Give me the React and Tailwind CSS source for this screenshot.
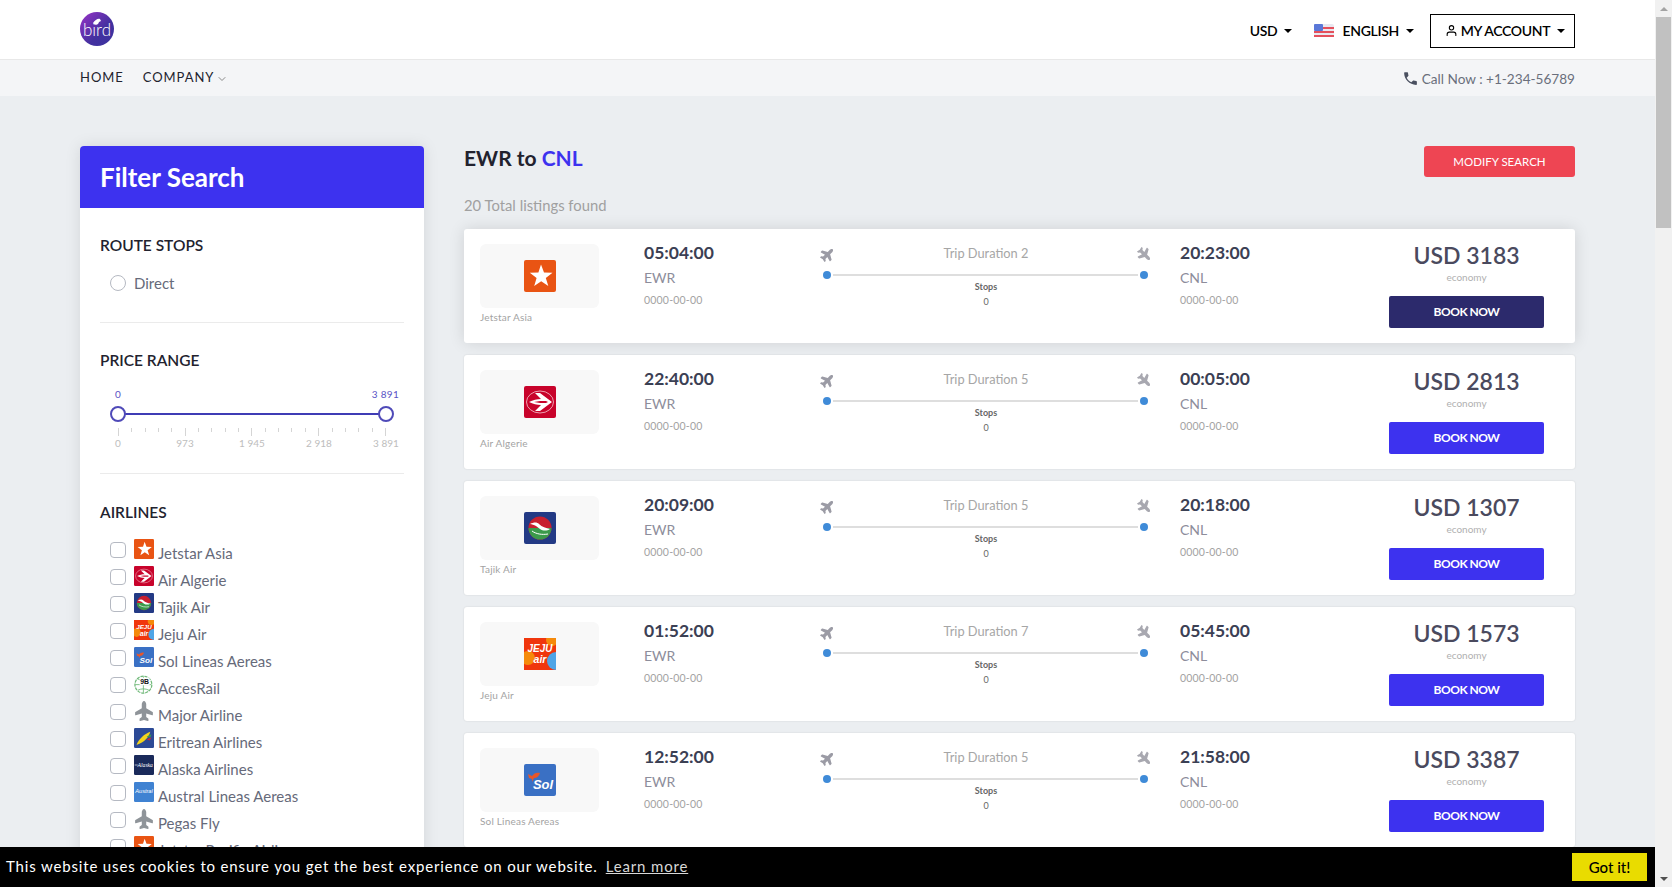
import React from "react";
import { FaPlane } from "react-icons/fa";
import { MdPhone } from "react-icons/md";
import { FiChevronDown, FiUser } from "react-icons/fi";

const font = "font-['Lato','Noto_Sans',sans-serif]";

// little airline marks, all on a 32 box
const AirlineLogo = ({ name, size = 32 }) => {
  if (name === "plane") {
    return (
      <span className="flex items-center justify-center" style={{ width: size, height: size }}>
        <FaPlane className="-rotate-90 text-[#8f9499]" size={size} />
      </span>
    );
  }
  return (
    <svg width={size} height={size} viewBox="0 0 32 32" className="block">
      {name === "jetstar" && (
        <>
          <rect width="32" height="32" rx="2" fill="#e95413" />
          <path d="M17 4.500l3 8 8.500.2-6.700 5.200 2.500 8.100-7.100-4.800-7 4.700 2.400-8-6.800-5.200 8.600-.2z" fill="#fff" />
        </>
      )}
      {name === "algerie" && (
        <>
          <rect width="32" height="32" rx="2" fill="#c8032b" />
          <ellipse cx="16" cy="16" rx="13.500" ry="11" fill="none" stroke="#f5c6cf" strokeWidth="0.8" />
          <path d="M5 16c4-2 8-3 12-3l-6-6h5l12 9-12 9h-5l6-6c-4 0-8-1-12-3z" fill="#fff" />
          <path d="M10 16l6-1h6l2 1-2 1h-6z" fill="#c8032b" />
        </>
      )}
      {name === "tajik" && (
        <>
          <rect width="32" height="32" rx="2" fill="#233a85" />
          <circle cx="16" cy="16" r="11.500" fill="#c8202f" />
          <path d="M4.500 16h23a11.500 11.500 0 0 1-23 0z" fill="#3b9a4b" />
          <path d="M6 12c4-2 7-2 9 0 3 3 7 4 11 5-3 2-7 2-10 0l-4-3c-2-1-4-2-6-2z" fill="#fff" />
          <path d="M8 19c4 3 10 4 16 3" fill="none" stroke="#fff" strokeWidth="1" />
        </>
      )}
      {name === "jeju" && (
        <>
          <rect width="32" height="32" fill="#f0360d" />
          <circle cx="28" cy="2" r="6" fill="#f58a0b" />
          <circle cx="4" cy="20" r="7" fill="#f58a0b" />
          <path d="M32 14a9 9 0 0 0 0 18z" fill="#4fa5e6" />
          <text x="16" y="14" textAnchor="middle" fontSize="10" fontWeight="900" fontStyle="italic" fill="#fff" fontFamily="Liberation Sans">JEJU</text>
          <text x="16" y="25" textAnchor="middle" fontSize="10.500" fontWeight="900" fontStyle="italic" fill="#fff" fontFamily="Liberation Sans">air</text>
        </>
      )}
      {name === "sol" && (
        <>
          <rect width="32" height="32" rx="2" fill="#3a70c4" />
          <path d="M4 10l4 2c2-3 5-4 8-3-1 3-3 5-6 5l-2 4 0-3-3-1z" fill="#e8562a" />
          <text x="19" y="25" textAnchor="middle" fontSize="13" fontWeight="700" fontStyle="italic" fill="#fff" fontFamily="Liberation Sans">Sol</text>
        </>
      )}
      {name === "acces" && (
        <>
          <circle cx="15" cy="17" r="13.500" fill="none" stroke="#6fb878" strokeWidth="2" strokeDasharray="5 1.500" />
          <path d="M2 17h26M15 4v26M6 8c6 3 12 3 18 0M6 26c6-3 12-3 18 0" fill="none" stroke="#6fb878" strokeWidth="1.400" />
          <rect x="9" y="6" width="16" height="12" fill="#fff" />
          <text x="17" y="16" textAnchor="middle" fontSize="11" fontWeight="700" fill="#111" fontFamily="Liberation Sans">9B</text>
        </>
      )}
      {name === "eritrean" && (
        <>
          <rect width="32" height="32" rx="2" fill="#2c4a96" />
          <path d="M4 27C8 17 16 10 26 6c-2 8-9 17-22 21z" fill="#f3d41c" />
          <path d="M20 14l8-4-2 5z" fill="#3a9a4a" />
          <path d="M20 18l8-3-3 5z" fill="#d3282f" />
        </>
      )}
      {name === "alaska" && (
        <>
          <rect width="32" height="32" rx="2" fill="#1a2a5a" />
          <text x="18" y="19" textAnchor="middle" fontSize="9" fontStyle="italic" fill="#fff" fontFamily="Liberation Serif">Alaska</text>
          <path d="M1 16h5" stroke="#fff" strokeWidth="1" />
        </>
      )}
      {name === "austral" && (
        <>
          <rect width="32" height="32" rx="2" fill="#3f82d2" />
          <text x="16" y="18" textAnchor="middle" fontSize="9" fontStyle="italic" fill="#fff" fontFamily="Liberation Sans">Austral</text>
        </>
      )}
    </svg>
  );
};

const airlines = [
  { name: "Jetstar Asia", logo: "jetstar" },
  { name: "Air Algerie", logo: "algerie" },
  { name: "Tajik Air", logo: "tajik" },
  { name: "Jeju Air", logo: "jeju" },
  { name: "Sol Lineas Aereas", logo: "sol" },
  { name: "AccesRail", logo: "acces" },
  { name: "Major Airline", logo: "plane" },
  { name: "Eritrean Airlines", logo: "eritrean" },
  { name: "Alaska Airlines", logo: "alaska" },
  { name: "Austral Lineas Aereas", logo: "austral" },
  { name: "Pegas Fly", logo: "plane" },
  { name: "Jetstar Pacific Airlines", logo: "jetstar" },
];

const flights = [
  { airline: "Jetstar Asia", logo: "jetstar", dep: "05:04:00", arr: "20:23:00", trip: 2, price: 3183 },
  { airline: "Air Algerie", logo: "algerie", dep: "22:40:00", arr: "00:05:00", trip: 5, price: 2813 },
  { airline: "Tajik Air", logo: "tajik", dep: "20:09:00", arr: "20:18:00", trip: 5, price: 1307 },
  { airline: "Jeju Air", logo: "jeju", dep: "01:52:00", arr: "05:45:00", trip: 7, price: 1573 },
  { airline: "Sol Lineas Aereas", logo: "sol", dep: "12:52:00", arr: "21:58:00", trip: 5, price: 3387 },
  { airline: "AccesRail", logo: "acces", dep: "09:15:00", arr: "14:32:00", trip: 5, price: 2140 },
];

const Caret = () => (
  <span className="ml-[7px] inline-block border-x-[4px] border-t-[4px] border-x-transparent border-t-black" />
);

const TimeCol = ({ time, code, className }) => (
  <div className={className}>
    <p className="-mt-[1px] text-[17.500px] leading-[20px] font-bold text-[#3b4054]">{time}</p>
    <p className="mt-[5px] text-[14px] leading-[20px] text-[#8d8d9b]">{code}</p>
    <p className="mt-[4px] text-[10.500px] leading-[17px] text-[#a3a3a3] tracking-[0.2px]">0000-00-00</p>
  </div>
);

const FlightCard = ({ flight, first }) => (
  <div
    className={
      first
        ? "flex h-[114px] shrink-0 rounded-[3px] bg-white pl-[16px] pt-[15px] shadow-[0_0_16px_rgba(0,0,0,0.12)]"
        : "flex h-[114px] shrink-0 rounded-[3px] bg-white pl-[16px] pt-[15px] shadow-[0_0_2px_rgba(0,0,0,0.12)]"
    }
  >
    <div className="w-[119px] shrink-0">
      <div className="flex h-[64px] items-center justify-center rounded-[6px] bg-[#f8f8f8]">
        <AirlineLogo name={flight.logo} />
      </div>
      <p className="mt-[3px] text-[10px] leading-[12px] text-[#a3a3a3] tracking-[0.2px]">{flight.airline}</p>
    </div>
    <TimeCol time={flight.dep} code="EWR" className="ml-[45px] w-[176px] shrink-0" />
    <div className="w-[332px] shrink-0">
      <div className="-mt-[2px] flex h-[24px] items-center justify-between">
        <FaPlane className="-rotate-45 text-[#9b9ba5]" size={15} />
        <span className="-mt-[1px] text-[12.800px] text-[#a6a6a6]">Trip Duration {flight.trip}</span>
        <FaPlane className="rotate-45 text-[#a8a8b0]" size={15} />
      </div>
      <div className="mt-[5px] flex items-center gap-[2px] pl-[3px] pr-[4px]">
        <span className="h-[8px] w-[8px] rounded-full bg-[#3f8bd8]" />
        <span className="h-[2px] flex-1 bg-[#dedede]" />
        <span className="h-[8px] w-[8px] rounded-full bg-[#3f8bd8]" />
      </div>
      <p className="mt-[1px] text-center text-[9px] leading-[14px] font-bold text-[#666]">Stops</p>
      <p className="text-center text-[9px] leading-[15px] text-[#666]">0</p>
    </div>
    <TimeCol time={flight.arr} code="CNL" className="ml-[28px] w-[209px] shrink-0" />
    <div className="flex w-[155px] shrink-0 flex-col items-center">
      <p className="text-[23px] leading-[22px] font-semibold text-[#4a4a5e]">USD {flight.price}</p>
      <p className="mt-[3px] text-[10px] leading-[16px] text-[#b0b0b0]">economy</p>
      <button
        className={
          first
            ? "mt-[11px] h-[32px] w-full rounded-[2px] bg-[#2c2a6c] text-[12px] font-bold tracking-[-0.5px] text-white"
            : "mt-[11px] h-[32px] w-full rounded-[2px] bg-[#3d32ef] text-[12px] font-bold tracking-[-0.5px] text-white"
        }
      >
        BOOK NOW
      </button>
    </div>
  </div>
);

const PriceSlider = () => (
  <div className="relative mx-[18px] mt-[18px]">
    <div className="-ml-[10px] -mr-[13px] flex justify-between text-[10px] leading-[12px] text-[#5a52c5]">
      <span className="pl-[7px]">0</span>
      <span className="tracking-[0.3px]">3 891</span>
    </div>
    <div className="relative mt-[6px] h-[16px]">
      <div className="absolute left-0 right-0 top-[7px] h-[2px] bg-[#3f3cb5]" />
      <span className="absolute left-[-8px] top-0 h-[16px] w-[16px] rounded-full border-[2px] border-[#4f4ab8] bg-white" />
      <span className="absolute right-[-8px] top-0 h-[16px] w-[16px] rounded-full border-[2px] border-[#4f4ab8] bg-white" />
    </div>
    <div className="mt-[6px] flex h-[8px] items-start justify-between">
      {Array.from({ length: 21 }).map((_, i) => (
        <span key={i} className={i % 5 === 0 ? "h-[8px] w-px bg-[#d5d5d5]" : "h-[4px] w-px bg-[#d5d5d5]"} />
      ))}
    </div>
    <div className="-mx-[20px] mt-[1px] flex justify-between text-[10px] leading-[12px] text-[#bdbdbd]">
      {["0", "973", "1 945", "2 918", "3 891"].map((t) => (
        <span key={t} className="w-[40px] text-center">{t}</span>
      ))}
    </div>
  </div>
);

const Sidebar = () => (
  <aside className="w-[344px] shrink-0 overflow-hidden rounded-t-[4px] bg-white shadow-[0_0_16px_rgba(0,0,0,0.1)]">
    <div className="flex h-[62px] items-center bg-[#3d32ef] px-[20px] pt-[1px]">
      <h2 className="text-[26px] font-bold text-white">Filter Search</h2>
    </div>
    <div className="px-[20px]">
      <div className="border-b border-[#ebebeb] pt-[27px] pb-[29px]">
        <h3 className="text-[15.500px] leading-[20px] font-semibold text-[#22222e]">ROUTE STOPS</h3>
        <label className="mt-[18px] flex h-[20px] items-center pl-[10px]">
          <span className="h-[16px] w-[16px] rounded-full border border-[#b5b9c2]" />
          <span className="ml-[8px] text-[15px] text-[#666a7a]">Direct</span>
        </label>
      </div>
      <div className="h-[151px] border-b border-[#ebebeb] pt-[27px]">
        <h3 className="text-[15.500px] leading-[20px] font-semibold text-[#22222e]">PRICE RANGE</h3>
        <PriceSlider />
      </div>
      <h3 className="mt-[28px] text-[15.500px] leading-[20px] font-semibold text-[#22222e]">AIRLINES</h3>
      <ul className="mt-[17px] pl-[10px]">
        {airlines.map((a) => (
          <li key={a.name} className="flex h-[27px] items-start">
            <span className="mt-[3px] h-[16px] w-[16px] shrink-0 rounded-[4px] border border-[#b5b9c2]" />
            <span className="ml-[8px]">
              <AirlineLogo name={a.logo} size={20} />
            </span>
            <span className="ml-[4px] mt-[4px] text-[15px] leading-[20px] text-[#666a7a]">{a.name}</span>
          </li>
        ))}
      </ul>
    </div>
  </aside>
);

const Scrollbar = () => (
  <div className="flex w-[17px] shrink-0 flex-col items-center bg-[#f1f1f1]">
    <div className="flex h-[17px] items-center">
      <span className="border-x-[4px] border-b-[4px] border-x-transparent border-b-[#a3a3a3]" />
    </div>
    <div className="h-[211px] w-[15px] bg-[#c1c1c1]" />
    <div className="flex-1" />
    <div className="flex h-[17px] items-center">
      <span className="border-x-[4px] border-t-[4px] border-x-transparent border-t-[#505050]" />
    </div>
  </div>
);

export default function App() {
  return (
    <div className={`flex h-[887px] overflow-hidden bg-[#ebeef1] ${font}`}>
      <div className="relative min-w-0 flex-1 overflow-hidden">
        {/* top bar */}
        <header className="flex h-[60px] items-center justify-between border-b border-[#e8e8e8] bg-white px-[80px] pt-[2px]">
          <svg width="34" height="34" viewBox="0 0 34 34" className="-mt-[3px]">
            <defs>
              <linearGradient id="birdLogo" x1="0" y1="0" x2="1" y2="1">
                <stop offset="0" stopColor="#9a33c8" />
                <stop offset="0.6" stopColor="#43309f" />
                <stop offset="1" stopColor="#3a33a0" />
              </linearGradient>
            </defs>
            <circle cx="17" cy="17" r="17" fill="url(#birdLogo)" />
            <text x="17" y="24" textAnchor="middle" fontSize="17" fontWeight="300" fill="#fff" fontFamily="Lato">bird</text>
            <path d="M13 11c2-3 5-5 7-4l1 2-2 1c-1 3-3 4-6 1z" fill="#fff" />
          </svg>
          <div className="flex items-center text-[14px] font-semibold tracking-[-0.3px] text-black">
            <span className="flex items-center">USD<Caret /></span>
            <svg width="20" height="13" viewBox="0 0 20 13" className="ml-[22px]">
              <rect width="20" height="13" rx="2" fill="#e8e8f0" />
              <path d="M0 3h20v2H0zM0 7h20v2H0zM0 11h20v2H0z" fill="#e5505c" />
              <rect width="9" height="7" rx="1" fill="#5a78d8" />
            </svg>
            <span className="ml-[8px] flex items-center">ENGLISH<Caret /></span>
            <button className="ml-[16px] flex h-[34px] w-[145px] items-center justify-center border-[1.500px] border-black pl-[5px] font-semibold">
              <FiUser size={13} className="mr-[3px]" />
              MY ACCOUNT<Caret />
            </button>
          </div>
        </header>

        {/* nav */}
        <nav className="flex h-[36px] items-center justify-between bg-[#f4f5f7] px-[80px]">
          <div className="flex items-center gap-[19px] text-[13px] tracking-[0.95px] text-[#22222e]">
            <span>HOME</span>
            <span className="flex items-center">
              COMPANY
              <FiChevronDown size={12} className="ml-[2px] mt-[2px] text-[#8a8a8a]" />
            </span>
          </div>
          <div className="mt-[2px] flex items-center text-[13.600px] text-[#6a6f7c]">
            <MdPhone size={17} className="mr-[3px] text-[#4a5060]" />
            Call Now : +1-234-56789
          </div>
        </nav>

        {/* content */}
        <main className="flex gap-[40px] px-[80px] pt-[50px]">
          <Sidebar />
          <section className="flex min-w-0 flex-1 flex-col">
            <div className="flex items-start justify-between">
              <h1 className="-mt-[1px] text-[21px] leading-[26px] font-bold text-[#22222e]">
                EWR to <span className="text-[#3d32ef]">CNL</span>
              </h1>
              <button className="h-[31px] w-[151px] rounded-[3px] bg-[#ee4553] text-[11.500px] text-white">MODIFY SEARCH</button>
            </div>
            <p className="mt-[18px] text-[14.800px] leading-[20px] text-[#a0a0a0]">20 Total listings found</p>
            <div className="mt-[14px] flex flex-col gap-[12px]">
              {flights.map((f, i) => (
                <FlightCard key={f.airline} flight={f} first={i === 0} />
              ))}
            </div>
          </section>
        </main>

        {/* cookie notice */}
        <div className="absolute bottom-0 left-0 right-0 flex h-[40px] items-center justify-between bg-black pl-[6px] pr-[8px]">
          <p className="-mt-[1px] text-[15px] tracking-[0.84px] text-white">
            This website uses cookies to ensure you get the best experience on our website.
            <a className="ml-[8px] text-[#d8d8d8] underline">Learn more</a>
          </p>
          <button className="h-[28px] w-[75px] bg-[#e9dc00] text-[15px] font-medium text-black">Got it!</button>
        </div>
      </div>
      <Scrollbar />
    </div>
  );
}
